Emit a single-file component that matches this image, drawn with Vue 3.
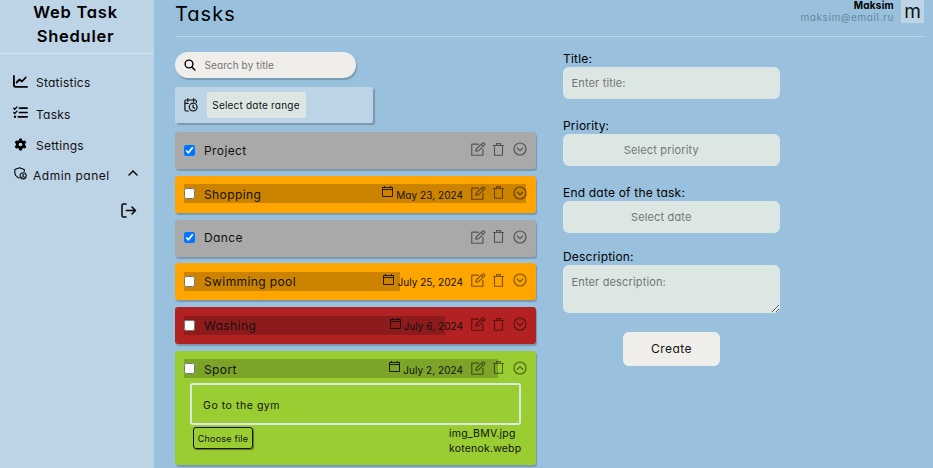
<script setup>
import { ref } from 'vue'

const nav = [
  { label: 'Statistics', icon: 'chart' },
  { label: 'Tasks', icon: 'list' },
  { label: 'Settings', icon: 'gear' },
]

const tasks = ref([
  { title: 'Project', done: true, tone: 'done' },
  { title: 'Shopping', done: false, tone: 'medium', date: 'May 23, 2024', progress: 342 },
  { title: 'Dance', done: true, tone: 'done' },
  { title: 'Swimming pool', done: false, tone: 'medium', date: 'July 25, 2024', progress: 216 },
  { title: 'Washing', done: false, tone: 'high', date: 'July 6, 2024', progress: 261 },
  {
    title: 'Sport', done: false, tone: 'low', date: 'July 2, 2024', progress: 314, open: true,
    text: 'Go to the gym', files: ['img_BMV.jpg', 'kotenok.webp'],
  },
])
</script>

<template>
  <div class="page">
    <aside class="sidebar">
      <h1 class="brand">Web Task<br />Sheduler</h1>
      <nav class="nav">
        <a v-for="item in nav" :key="item.label" class="nav-item">
          <span class="nav-icon">
            <svg v-if="item.icon === 'chart'" width="15" height="13" viewBox="0 0 15 13" fill="none" stroke="#000" stroke-width="1.8" stroke-linecap="round" stroke-linejoin="round">
              <path d="M.9.9v9.2q0 1.8 1.8 1.8H14M3.6 7.5l2.9-3 2.4 2 3.8-4" />
            </svg>
            <svg v-else-if="item.icon === 'list'" width="15" height="13" viewBox="0 0 15 13" fill="none" stroke="#000" stroke-width="1.7" stroke-linecap="round">
              <path d="M6.5 2.2h7.6M6.5 6.5h7.6M5.4 10.8h8.7" />
              <path d="M.8 2.3l1 1L4 .9M.8 6.5l1 1L4 5.1" stroke-width="1.3" />
              <circle cx="2" cy="10.8" r="1.2" fill="#000" stroke="none" />
            </svg>
            <svg v-else class="gear" width="13" height="13" viewBox="0 0 13 13">
              <g fill="#000">
                <rect x="5" y=".5" width="3" height="12" rx=".8" />
                <rect x="5" y=".5" width="3" height="12" rx=".8" transform="rotate(60 6.5 6.5)" />
                <rect x="5" y=".5" width="3" height="12" rx=".8" transform="rotate(120 6.5 6.5)" />
              </g>
              <circle cx="6.5" cy="6.5" r="3.2" fill="none" stroke="#000" stroke-width="2.8" />
              <circle cx="6.5" cy="6.5" r="1.8" fill="#bdd3e6" />
            </svg>
          </span>
          <span>{{ item.label }}</span>
        </a>
        <a class="nav-item admin">
          <svg class="shield" width="13" height="13" viewBox="0 0 13 13" fill="none" stroke="#000" stroke-width="1.1" stroke-linejoin="round">
            <path d="M10.3 4.8V2.4L5.5.7.8 2.4v3.2c0 2.7 1.8 4.5 4.7 5.7" />
            <circle cx="9.1" cy="8.8" r="3.1" />
            <circle cx="9.1" cy="7.9" r=".7" fill="#000" stroke-width=".5" />
            <path d="M7.3 10.3q1.8-1 3.6 0" />
          </svg>
          <span class="admin-label">Admin panel</span>
          <svg class="caret" width="10" height="6" viewBox="0 0 10 6" fill="none" stroke="#000" stroke-width="1.4" stroke-linecap="round"><path d="M1 5l4-4 4 4" /></svg>
        </a>
      </nav>
      <svg class="logout" width="16" height="15" viewBox="0 0 16 15" fill="none" stroke="#000" stroke-width="1.5" stroke-linecap="round" stroke-linejoin="round">
        <path d="M5 .9H2.3Q1 .9 1 2.2v10.6q0 1.3 1.3 1.3H5M5.3 7.5H14.5M11 4l3.5 3.5L11 11" />
      </svg>
    </aside>

    <main class="main">
      <header class="header">
        <h2 class="heading">Tasks</h2>
        <div class="user">
          <div class="user-text">
            <div class="user-name">Maksim</div>
            <div class="user-mail">maksim@email.ru</div>
          </div>
          <div class="avatar">m</div>
        </div>
      </header>

      <div class="content">
        <section class="board">
          <label class="search">
            <svg width="12" height="12" viewBox="0 0 12 12" fill="none" stroke="#000" stroke-width="1.4" stroke-linecap="round"><circle cx="5" cy="5" r="3.9" /><path d="M7.9 7.9l3 3" /></svg>
            <input type="text" placeholder="Search by title" />
          </label>
          <div class="range">
            <svg width="14" height="14" viewBox="0 0 14 14" fill="none" stroke="#111" stroke-width="1.2" stroke-linecap="round" stroke-linejoin="round">
              <path d="M12.4 4.5V3.2q0-1.2-1.2-1.2H2.1Q.9 2 .9 3.2v8.6q0 1.2 1.2 1.2h2.3M3.8.7v2.6M9.6.7v2.6M.9 5.4h3.3" />
              <circle cx="9.2" cy="9.1" r="3.9" /><path d="M9.1 7v2.4l1.5.9" />
            </svg>
            <button class="range-btn">Select date range</button>
          </div>

          <div class="list">
            <article v-for="task in tasks" :key="task.title" class="card" :class="[task.tone, { open: task.open }]">
              <div class="row">
                <div v-if="task.progress" class="progress" :style="{ width: task.progress + 'px' }"></div>
                <input v-model="task.done" type="checkbox" class="check" />
                <span class="name">{{ task.title }}</span>
                <template v-if="task.date">
                  <svg class="cal" width="11" height="11" viewBox="0 0 11 11" fill="none" stroke="#000" stroke-opacity=".8" stroke-width="1"><path d="M.5 1.5h10v9H.5zM.5 3.5h10M2.5 0v1.5M8.5 0v1.5" /></svg>
                  <span class="date">{{ task.date }}</span>
                </template>
                <span class="actions">
                  <svg width="15" height="14" viewBox="0 0 14 13" fill="none" stroke="currentColor" stroke-width="1.1" stroke-linejoin="round">
                    <path d="M7.4 1.9H.7v10.4h10.4V6.4" />
                    <path d="M4.5 8.6l.5-2.3 5.6-5.1q.9-.7 1.8.1.8.9 0 1.8L6.8 8.2zM9.6 2.1l1.9 1.9" />
                  </svg>
                  <svg class="bin" width="11" height="13" viewBox="0 0 11 13" fill="none" stroke="currentColor" stroke-width="1.1" stroke-linejoin="round">
                    <path d="M0 2.5h11M1.5 2.5v9.8h8V2.5M3.5 2.5V.6h4v1.9" />
                  </svg>
                  <svg width="14" height="14" viewBox="0 0 13 13" fill="none" stroke="currentColor" stroke-width="1.1">
                    <circle cx="6.5" cy="6.5" r="5.6" />
                    <path :d="task.open ? 'M3.7 7.9l2.8-2.6 2.8 2.6' : 'M3.7 5.4l2.8 2.6 2.8-2.6'" />
                  </svg>
                </span>
              </div>
              <template v-if="task.open">
                <div class="note">{{ task.text }}</div>
                <div class="attach">
                  <button class="choose">Choose file</button>
                  <div class="files"><div v-for="file in task.files" :key="file">{{ file }}</div></div>
                </div>
              </template>
            </article>
          </div>
        </section>

        <form class="form" @submit.prevent>
          <label class="label">Title:</label>
          <input class="field" type="text" placeholder="Enter title:" />
          <label class="label">Priority:</label>
          <button type="button" class="field pick">Select priority</button>
          <label class="label">End date of the task:</label>
          <button type="button" class="field pick day">Select date</button>
          <label class="label">Description:</label>
          <textarea class="field area" placeholder="Enter description:"></textarea>
          <button class="create">Create</button>
        </form>
      </div>
    </main>
  </div>
</template>

<style>
body { margin: 0; overflow: hidden; background: #99c0dd; }
</style>

<style scoped>
* { box-sizing: border-box; }
.page { display: flex; width: 933px; height: 468px; overflow: hidden; font-family: Inter, sans-serif; font-feature-settings: 'cv11' 1; font-size: 12px; color: #111; background: #99c0dd; }
button, input, textarea { font-family: inherit; font-feature-settings: inherit; margin: 0; border: 0; outline: 0; }
svg { display: block; flex: none; }

.sidebar { width: 154px; flex: none; background: #bdd3e6; }
.brand { margin: 0; height: 54px; padding-right: 3px; border-bottom: 1px solid #d4e4f0; font-size: 16.5px; font-weight: 600; line-height: 24px; text-align: center; letter-spacing: .75px; color: #000; }
.nav { padding-top: 13px; }
.nav-item { display: flex; align-items: center; height: 31.5px; padding-left: 13px; letter-spacing: .25px; }
.nav-icon { width: 23px; height: 16px; }
.gear { margin: 0 0 0 1px; }
.admin { height: 28px; padding-left: 14px; letter-spacing: .5px; }
.shield { margin: -4px 6px 0 0; }
.admin-label { width: 94.5px; }
.caret { margin-top: -6px; }
.logout { margin: 13px 0 0 121px; }

.main { width: 779px; padding: 0 9px 0 21px; }
.header { display: flex; justify-content: space-between; height: 37px; border-bottom: 1px solid #bdd3e6; }
.heading { margin: 0; font-size: 20px; font-weight: 400; line-height: 28px; letter-spacing: 1px; color: #000; }
.user { display: flex; gap: 7px; }
.user-text { font-size: 10px; line-height: 12px; text-align: right; }
.user-name { font-weight: 700; margin-top: -1px; color: #000; letter-spacing: .25px; }
.user-mail { color: #6788a0; letter-spacing: .6px; }
.avatar { width: 23px; height: 23px; background: #bdd3e6; font-size: 19px; line-height: 23px; text-align: center; }

.content { display: flex; gap: 27px; }
.board { width: 361px; padding-top: 15px; }
.search { display: flex; align-items: center; width: 181px; height: 26px; padding-left: 9px; border-radius: 13px; background: #f0eeeb; box-shadow: 1px 2px 1px #7899b0; }
.search input { width: 150px; padding: 0; margin-left: 8.5px; background: none; font-size: 10px; letter-spacing: .1px; }
::placeholder { color: #757575; opacity: 1; }
.range { display: flex; align-items: center; gap: 8.5px; width: 198px; height: 36px; margin-top: 9px; padding-left: 9px; border-radius: 2px; background: #bdd3e6; box-shadow: 2px 2px 1px #7899b0; }
.range-btn { width: 99px; height: 26px; padding: 0; border-radius: 2px; background: #dce7e4; font-size: 10px; letter-spacing: .2px; white-space: nowrap; color: #111; }

.list { display: flex; flex-direction: column; gap: 6.8px; margin-top: 9px; }
.card { height: 37px; padding: 8.5px 9px 0; border-radius: 3px; box-shadow: 1px 2px 1px #7899b0; }
.done { background: #a9a9a9; }
.medium { background: #ffa500; }
.high { background: #b22222; }
.low { background: #9acd32; }
.open { height: 114px; }
.row { position: relative; display: flex; align-items: center; height: 19px; }
.progress { position: absolute; left: 0; top: 0; height: 19px; background: rgba(0, 0, 0, .2); }
.check { position: relative; width: 11px; height: 11px; margin-left: 0; accent-color: #0075ff; }
.name { position: relative; flex: 1; margin: .5px 0 0 9px; letter-spacing: .4px; }
.cal { position: relative; margin: -4px 3px 0 0; }
.date { position: relative; margin-top: 1.5px; font-size: 10px; letter-spacing: .05px; }
.actions { position: relative; display: flex; align-items: center; width: 56px; margin: -2px -.5px 0 8px; justify-content: space-between; color: rgba(0, 0, 0, .5); margin-right: 0; }
.bin { margin-right: 2px; }
.note { width: 331px; height: 42px; margin: 5px 0 0 6px; padding-left: 11px; border: 2px solid #dce7e4; border-radius: 3px; font-size: 10.5px; line-height: 41px; letter-spacing: .55px; }
.attach { display: flex; justify-content: space-between; width: 338px; padding: 2px 1px 0 9px; }
.choose { width: 60px; height: 22px; padding: 1px 0 0; border: 1px solid #111; border-radius: 3px; background: none; box-shadow: 1px 1px 1px #5d7d1e; font-size: 9px; letter-spacing: .2px; white-space: nowrap; color: #111; }
.files { width: 72px; font-size: 10.5px; line-height: 14.5px; letter-spacing: .2px; }

.form { display: flex; flex-direction: column; width: 217px; padding-top: 12.5px; }
.label { height: 17.5px; line-height: 17px; letter-spacing: .2px; color: #000; }
.field { height: 32px; padding: 0 8.5px; border-radius: 6px; background: #dce7e4; font-size: 11px; letter-spacing: .15px; color: #757575; flex: none; width: 217px; margin-bottom: 17.6px; }
.pick { padding-right: 29px; text-align: center; }
.day { margin-bottom: 14.4px; }
.area { height: 48px; padding-top: 9.5px; margin-bottom: 19px; resize: vertical; }
.create { align-self: center; width: 97px; height: 33.5px; padding: 0; border-radius: 6px; background: #f0eeeb; font-size: 12px; letter-spacing: .5px; color: #111; }
</style>
